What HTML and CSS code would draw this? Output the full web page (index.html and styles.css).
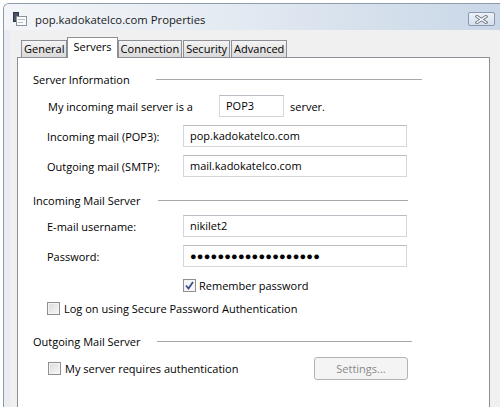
FILE: index.html
```html
<!DOCTYPE html>
<html>
<head>
    <title>pop.kadokatelco.com Properties</title>
    <link rel="stylesheet" href="styles.css">
</head>
<body>
    <div class="window">
        <div class="titlebar">
            <svg class="app-icon" width="14" height="15" viewBox="0 0 14 15">
                <rect x="0.5" y="0.5" width="5" height="9" fill="#4a5668" stroke="#2c3542"/>
                <rect x="3.5" y="4.5" width="10" height="9" fill="#fdfdfd" stroke="#8a929c"/>
                <rect x="5" y="7" width="7" height="1" fill="#b5bcc6"/>
                <rect x="5" y="10" width="5" height="1" fill="#b5bcc6"/>
            </svg>
            <span class="title">pop.kadokatelco.com Properties</span>
            <div class="close-btn">
                <svg width="13" height="9" viewBox="0 0 13 9">
                    <path d="M2 1.5 L11 7.5 M11 1.5 L2 7.5" stroke="#6b7687" stroke-width="3.2" stroke-linecap="square"/>
                    <path d="M2 1.5 L11 7.5 M11 1.5 L2 7.5" stroke="#ffffff" stroke-width="1.3" stroke-linecap="square"/>
                </svg>
            </div>
        </div>
        <div class="client">
            <div class="tabs">
                <div class="tab">General</div>
                <div class="tab active">Servers</div>
                <div class="tab">Connection</div>
                <div class="tab">Security</div>
                <div class="tab">Advanced</div>
            </div>
            <div class="panel">
                <div class="group-title first-group">
                    <span>Server Information</span>
                    <div class="rule"></div>
                </div>
                <div class="row">
                    <span class="server-type-label">My incoming mail server is a</span>
                    <div class="textbox short">POP3</div>
                    <span class="after-box">server.</span>
                </div>
                <div class="row">
                    <label>Incoming mail (POP3):</label>
                    <div class="textbox">pop.kadokatelco.com</div>
                </div>
                <div class="row">
                    <label>Outgoing mail (SMTP):</label>
                    <div class="textbox">mail.kadokatelco.com</div>
                </div>

                <div class="group-title incoming-group">
                    <span>Incoming Mail Server</span>
                    <div class="rule"></div>
                </div>
                <div class="row tight">
                    <label>E-mail username:</label>
                    <div class="textbox">nikilet2</div>
                </div>
                <div class="row">
                    <label>Password:</label>
                    <div class="textbox password">&#9679;&#9679;&#9679;&#9679;&#9679;&#9679;&#9679;&#9679;&#9679;&#9679;&#9679;&#9679;&#9679;&#9679;&#9679;&#9679;&#9679;&#9679;&#9679;</div>
                </div>
                <div class="check-row remember">
                    <span class="checkbox checked">
                        <svg width="9" height="9" viewBox="0 0 9 9">
                            <path d="M1 4.5 L3.5 7.5 L8 1" fill="none" stroke="#3a4f8c" stroke-width="1.8"/>
                        </svg>
                    </span>
                    <span>Remember password</span>
                </div>
                <div class="check-row spa">
                    <span class="checkbox"></span>
                    <span>Log on using Secure Password Authentication</span>
                </div>

                <div class="group-title outgoing-group">
                    <span>Outgoing Mail Server</span>
                    <div class="rule"></div>
                </div>
                <div class="row auth-row">
                    <span class="checkbox"></span>
                    <span class="auth-label">My server requires authentication</span>
                    <div class="button disabled">Settings...</div>
                </div>
            </div>
        </div>
    </div>
</body>
</html>
```

FILE: styles.css
```css
body {
    margin: 0;
    background-color: #fff;
    font-family: "Open Sans", "Noto Sans", sans-serif;
    font-size: 11px;
    color: #000;
    overflow: hidden;
}
.window {
    margin: 3px 0 0 3px;
    height: 404px;
    border-top: 1px solid #8d9aaa;
    border-left: 1px solid #8d9aaa;
    border-top-left-radius: 6px;
    background-color: #e9edf2;
    overflow: hidden;
}
.titlebar {
    display: flex;
    align-items: center;
    height: 26px;
    box-sizing: border-box;
    padding: 4px 5px 0 9px;
    background: linear-gradient(to right, #f3f5f8 0%, #e6ecf3 40%, #c9d7e7 100%);
}
.app-icon {
    flex: none;
    margin-top: 1px;
}
.title {
    margin-left: 8px;
    font-size: 11.3px;
    color: #1a1a1a;
}
.close-btn {
    margin-left: auto;
    width: 27px;
    height: 14px;
    box-sizing: border-box;
    border: 1px solid #8798b0;
    border-radius: 2px;
    background: linear-gradient(#eef2f7, #d6e0eb);
    display: flex;
    align-items: center;
    justify-content: center;
}
.client {
    background-color: #f0f0f0;
    height: 380px;
    margin-left: 6px;
    padding-left: 7px;
}
.tabs {
    display: flex;
    align-items: flex-end;
    height: 27px;
    padding-left: 4px;
}
.tab {
    height: 17px;
    box-sizing: border-box;
    padding: 0 2px;
    margin-right: 1px;
    border: 1px solid #8c8f96;
    border-bottom: none;
    background: linear-gradient(#f4f4f4, #e6e6e6 50%, #dadada);
    line-height: 15px;
}
.tab.active {
    position: relative;
    z-index: 1;
    height: 21px;
    margin: 0 0 -1px -1px;
    padding: 0 5px;
    background: #fff;
    line-height: 17px;
}
.panel {
    width: 473px;
    height: 360px;
    box-sizing: border-box;
    border: 1px solid #8c8f96;
    background-color: #fff;
    padding: 13px 0 0 15px;
}
.group-title {
    display: flex;
    align-items: center;
    height: 16px;
}
.rule {
    flex: 1;
    border-top: 1px solid #a8a8a8;
    margin-left: 17px;
}
.first-group {
    width: 389px;
}
.first-group .rule {
    margin-left: 26px;
}
.incoming-group {
    width: 375px;
    margin-top: 15px;
}
.outgoing-group {
    width: 379px;
    margin-top: 17px;
}
.row {
    display: flex;
    align-items: center;
    height: 22px;
    width: 360px;
    margin: 8px 0 0 14px;
}
.row.tight {
    margin-top: 7px;
}
.row label {
    width: 136px;
    flex: none;
}
.server-type-label {
    width: 171px;
    flex: none;
    padding-left: 1px;
}
.textbox {
    flex: none;
    width: 224px;
    height: 22px;
    box-sizing: border-box;
    border: 1px solid #d3d6db;
    border-top-color: #b9bcc2;
    padding-left: 6px;
    line-height: 20px;
    white-space: nowrap;
}
.textbox.short {
    width: 65px;
}
.after-box {
    margin-left: 6px;
}
.password {
    font-family: "Liberation Sans", sans-serif;
    font-size: 11px;
    letter-spacing: 0.2px;
}
.check-row {
    display: flex;
    align-items: center;
    gap: 4px;
    height: 16px;
    margin-left: 14px;
}
.check-row.remember {
    margin: 10px 0 0 150px;
    gap: 3px;
}
.check-row.spa {
    margin-top: 7px;
}
.checkbox {
    flex: none;
    width: 13px;
    height: 13px;
    box-sizing: border-box;
    border: 1px solid #8f8f8f;
    background: linear-gradient(135deg, #dcdcdc, #f7f7f7);
    box-shadow: inset 0 0 0 1px #f4f4f4;
    display: flex;
    align-items: center;
    justify-content: center;
}
.checkbox.checked {
    background: #f6f6f6;
}
.auth-row {
    height: 23px;
    margin-top: 8px;
    padding-left: 1px;
}
.auth-label {
    margin-left: 4px;
}
.button {
    margin-left: auto;
    width: 94px;
    height: 23px;
    box-sizing: border-box;
    border: 1px solid #b3b3b3;
    border-radius: 3px;
    background-color: #f4f4f4;
    text-align: center;
    line-height: 21px;
}
.button.disabled {
    color: #8a8a8a;
}
```
